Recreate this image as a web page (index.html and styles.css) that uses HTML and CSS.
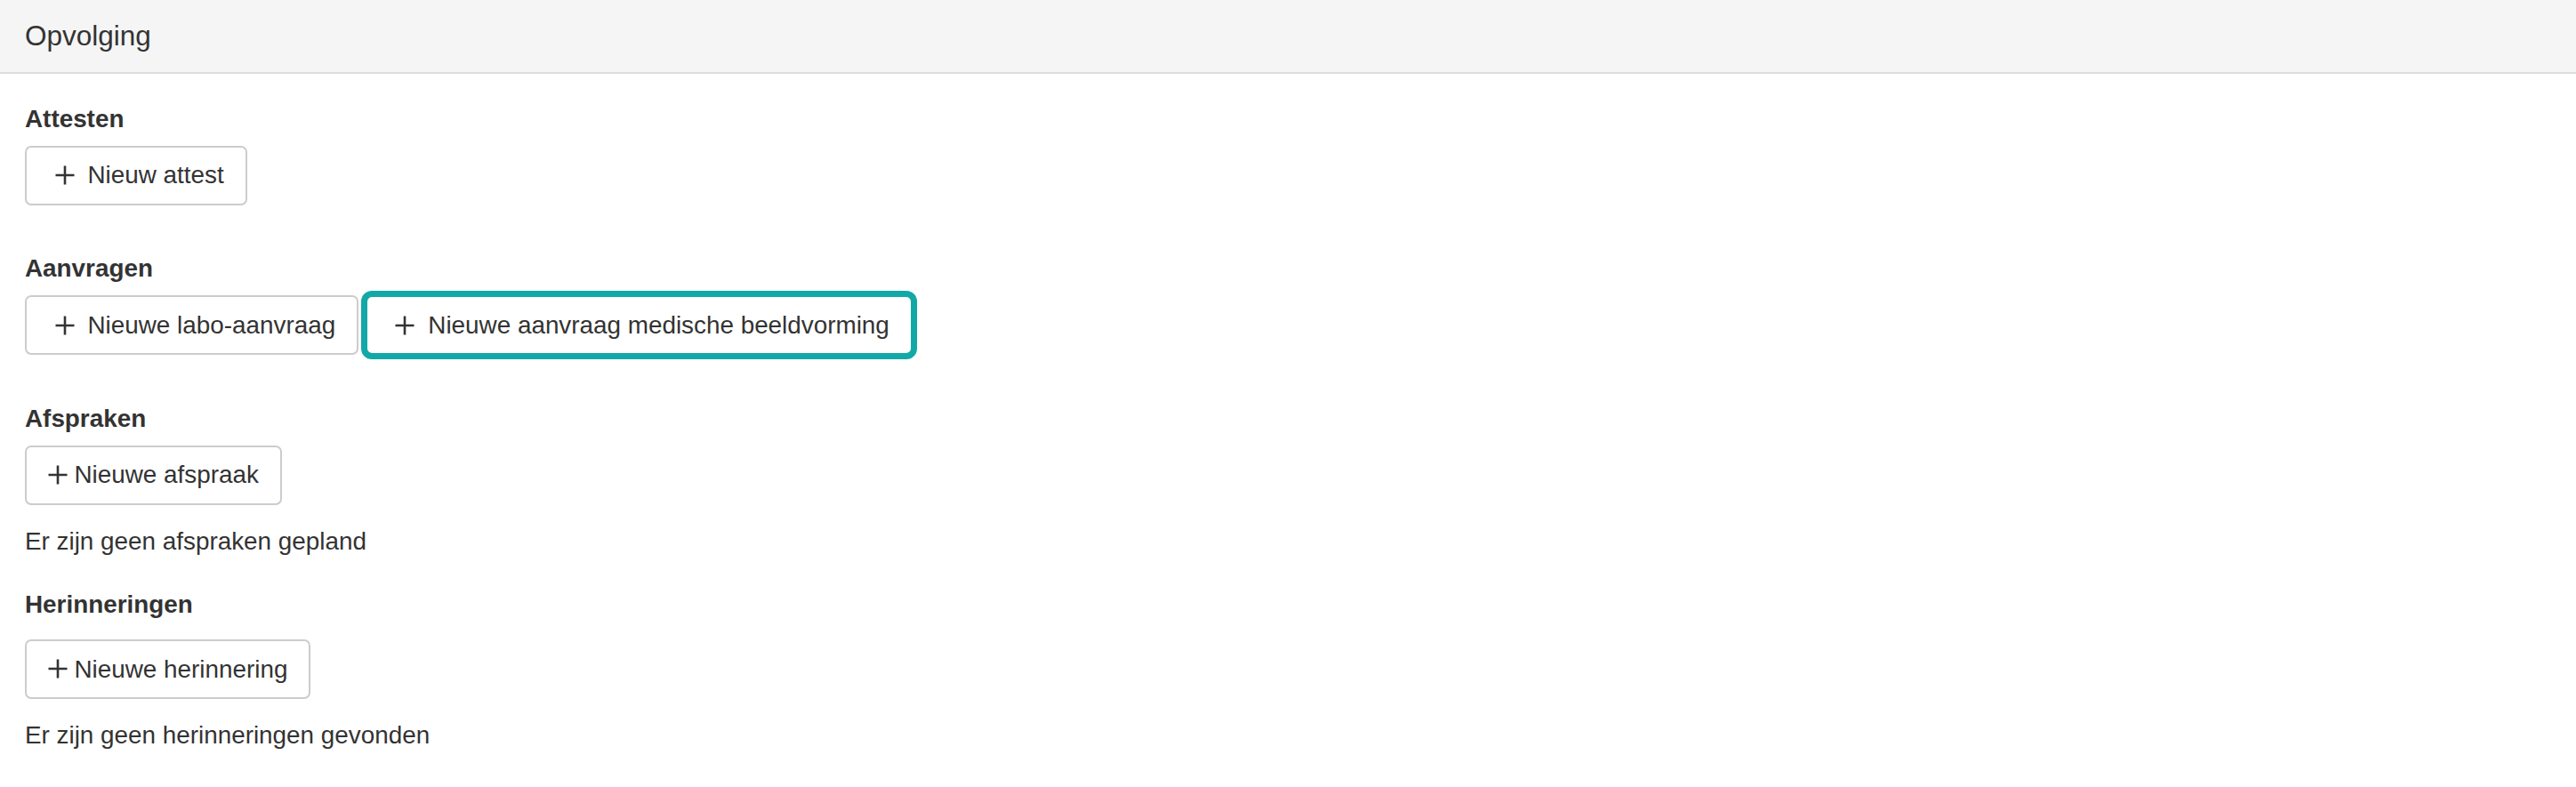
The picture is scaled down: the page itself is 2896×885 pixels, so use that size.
FILE: index.html
```html
<!DOCTYPE html>
<html lang="nl">
<head>
<meta charset="utf-8">
<title>Opvolging</title>
<link rel="stylesheet" href="styles.css">
</head>
<body>
<div class="panel">
  <div class="panel-heading">Opvolging</div>
  <div class="panel-body">
    <div class="section section-gap">
      <div class="section-title">Attesten</div>
      <div class="btn-row">
        <button class="btn btn-spaced"><svg class="plus" viewBox="0 0 22 22"><path d="M11 0.5V21.5M0.5 11H21.5"/></svg><span>Nieuw attest</span></button>
      </div>
    </div>
    <div class="section section-gap">
      <div class="section-title">Aanvragen</div>
      <div class="btn-row">
        <button class="btn btn-spaced"><svg class="plus" viewBox="0 0 22 22"><path d="M11 0.5V21.5M0.5 11H21.5"/></svg><span>Nieuwe labo-aanvraag</span></button>
        <button class="btn btn-spaced btn-focus"><svg class="plus" viewBox="0 0 22 22"><path d="M11 0.5V21.5M0.5 11H21.5"/></svg><span>Nieuwe aanvraag medische beeldvorming</span></button>
      </div>
    </div>
    <div class="section section-note-gap">
      <div class="section-title">Afspraken</div>
      <div class="btn-row">
        <button class="btn btn-tight"><svg class="plus" viewBox="0 0 22 22"><path d="M11 0.5V21.5M0.5 11H21.5"/></svg><span>Nieuwe afspraak</span></button>
      </div>
      <p class="note">Er zijn geen afspraken gepland</p>
    </div>
    <div class="section">
      <div class="section-title title-loose">Herinneringen</div>
      <div class="btn-row">
        <button class="btn btn-tight"><svg class="plus" viewBox="0 0 22 22"><path d="M11 0.5V21.5M0.5 11H21.5"/></svg><span>Nieuwe herinnering</span></button>
      </div>
      <p class="note">Er zijn geen herinneringen gevonden</p>
    </div>
  </div>
</div>
</body>
</html>
```
FILE: styles.css
```css
html, body {
  margin: 0;
  padding: 0;
  background: #ffffff;
}

body {
  font-family: "Liberation Sans", Arial, sans-serif;
  font-size: 27.85px;
  line-height: 39.6px;
  color: #333333;
}

.panel {
  width: 100%;
}

.panel-heading {
  height: 81px;
  padding: 0 28px;
  display: flex;
  align-items: center;
  background: #f5f5f5;
  border-bottom: 2px solid #dddddd;
  font-size: 31.5px;
}

.panel-body {
  padding: 30.5px 28px 40px 28px;
}

.section-gap {
  margin-bottom: 51.5px;
}

.section-note-gap {
  margin-bottom: 31.5px;
}

.section-title {
  font-weight: bold;
  margin-bottom: 10.5px;
}

.title-loose {
  margin-bottom: 19.5px;
}

.btn-row {
  display: flex;
  gap: 7.7px;
}

.btn {
  display: inline-flex;
  align-items: center;
  height: 67px;
  box-sizing: border-box;
  margin: 0;
  padding: 0 24px 0 24px;
  border: 2px solid #cccccc;
  border-radius: 7px;
  background: #ffffff;
  font-family: inherit;
  font-size: 27.85px;
  line-height: 39.6px;
  color: #333333;
}

.btn-spaced .plus {
  margin-left: 7.5px;
  margin-right: 15px;
}

.btn-tight .plus {
  margin-right: 7.5px;
}

.plus {
  width: 22px;
  height: 22px;
  flex: none;
}

.plus path {
  stroke: #333333;
  stroke-width: 2.6;
  fill: none;
}

.btn-focus {
  outline: 7px solid #13a8a8;
  outline-offset: -2px;
  border-radius: 7px;
}

.note {
  margin: 21px 0 0 0;
}
```
